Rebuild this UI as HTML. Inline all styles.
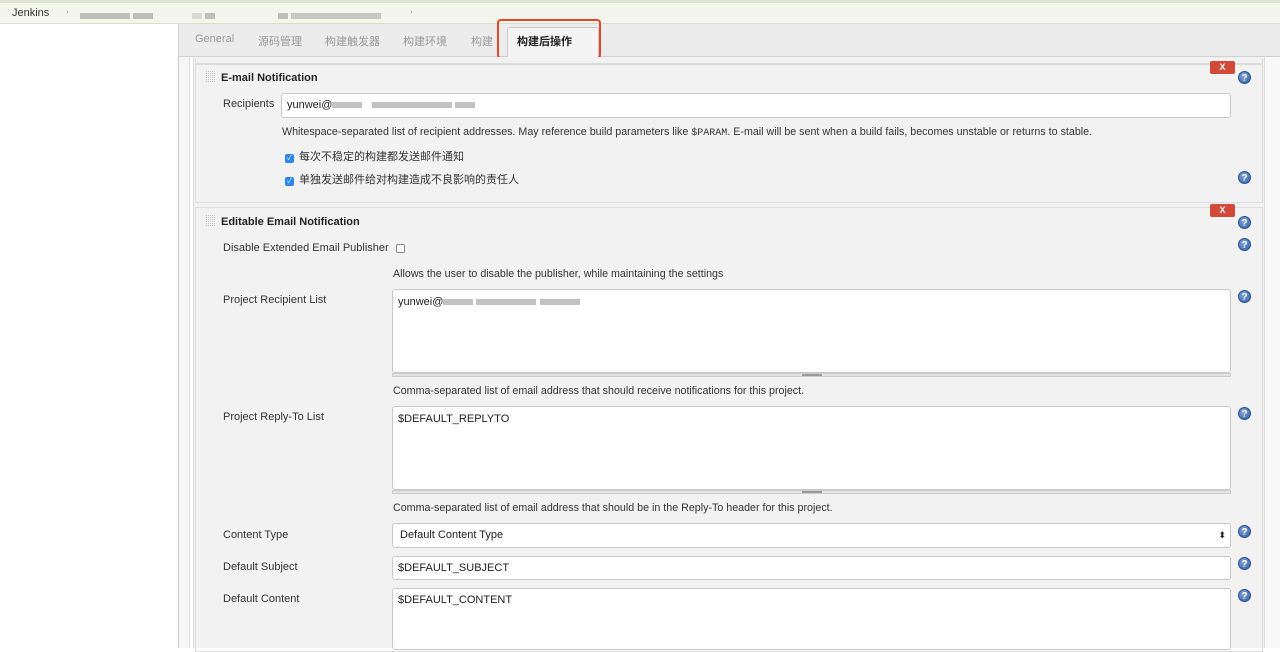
<!DOCTYPE html>
<html><head><meta charset="utf-8"><style>
*{margin:0;padding:0;box-sizing:border-box}
body{width:1280px;height:648px;overflow:hidden;background:#fff;font-family:"Liberation Sans","Noto Sans CJK SC",sans-serif;font-size:11px;color:#333;position:relative}
.a{position:absolute}
.top{left:0;top:0;width:1280px;height:24px;background:#f4f6ec;border-top:3px solid #dfe3d2;border-bottom:1px solid #d8dccb}
.tabs{left:178px;top:24px;width:1102px;height:33px;background:#ececec;border-left:1px solid #ccc;border-bottom:1px solid #d0d0d0}
.tab{top:33px;font-size:11px;color:#999}
.strip{left:178px;top:57px;width:12px;height:591px;background:#f6f6f6;border-left:1px solid #ccc;border-right:1px solid #ddd}
.panel{left:193px;top:57px;width:1072px;height:591px;background:#f2f2f2;border-left:1px solid #ddd;border-right:1px solid #ddd}
.rs{left:1265px;top:57px;width:15px;height:591px;background:#f8f8f8}
.sec{left:195px;border:1px solid #dcdcdc;width:1068px}
.h{font-weight:bold;font-size:11px;color:#222}
.grip{width:9px;height:12px;background-image:linear-gradient(90deg,transparent 50%,#f2f2f2 50%),linear-gradient(transparent 50%,#f2f2f2 50%);background-color:#c4c4c4;background-size:2px 2px}
.x{width:25px;height:13px;background:#d24939;color:#fff;font-size:9px;text-align:center;line-height:13px;border-radius:2px;font-weight:bold}
.q{width:13px;height:13px;border-radius:50%;background:radial-gradient(circle at 40% 35%,#7fa4d8,#2d5ea8);color:#fff;font-size:10px;font-weight:bold;text-align:center;line-height:13px;border:1px solid #294f8f}
.in{background:#fff;border:1px solid #c9c9c9;border-radius:3px;font-size:11px;color:#222;padding-left:5px}
.cb{width:9px;height:9px;border-radius:2px;background:#2d86f0;color:#fff;font-size:7px;line-height:9px;text-align:center}
.lbl{font-size:11px;color:#333}
.d{font-size:10.7px;color:#333}
.blur{display:inline-block;height:6px;background:#999;vertical-align:middle;opacity:.6}
</style></head><body>
<div class="a top"></div>
<div class="a" style="left:12px;top:7px;font-size:11px;color:#333">Jenkins</div>
<div class="a" style="left:66px;top:7px;color:#999;font-size:8px">›</div>
<div class="a" style="left:80px;top:10px"><span class="blur" style="width:50px"></span> <span class="blur" style="width:20px"></span></div>
<div class="a" style="left:192px;top:10px"><span class="blur" style="width:10px;opacity:.3"></span> <span class="blur" style="width:10px"></span></div>
<div class="a" style="left:278px;top:10px"><span class="blur" style="width:10px"></span> <span class="blur" style="width:90px;opacity:.5"></span></div>
<div class="a" style="left:410px;top:7px;color:#999;font-size:8px">›</div>

<div class="a tabs"></div>
<div class="a tab" style="left:195px">General</div>
<div class="a tab" style="left:258px">源码管理</div>
<div class="a tab" style="left:325px">构建触发器</div>
<div class="a tab" style="left:403px">构建环境</div>
<div class="a tab" style="left:471px">构建</div>
<div class="a" style="left:507px;top:27px;width:92px;height:31px;background:#f4f4f4;border:1px solid #ccc;border-bottom:none;border-radius:3px 3px 0 0"></div>
<div class="a" style="left:517px;top:33px;font-weight:bold;color:#222">构建后操作</div>
<div class="a" style="left:497px;top:19px;width:104px;height:40px;border:2px solid #e9452a;border-radius:4px"></div>

<div class="a strip"></div>
<div class="a panel"></div>
<div class="a rs"></div>

<div class="a sec" style="top:59px;height:5px;border-top:none"></div>
<div class="a sec" style="top:64px;height:139px"></div>
<div class="a grip" style="left:206px;top:71px"></div>
<div class="a h" style="left:221px;top:72px">E-mail Notification</div>
<div class="a x" style="left:1210px;top:61px">X</div>
<div class="a q" style="left:1238px;top:71px">?</div>
<div class="a lbl" style="left:223px;top:98px">Recipients</div>
<div class="a in" style="left:281px;top:93px;width:950px;height:25px;line-height:23px">yunwei@<span class="blur" style="width:30px"></span> &nbsp; <span class="blur" style="width:80px"></span> <span class="blur" style="width:20px"></span></div>
<div class="a d" style="left:282px;top:126px">Whitespace-separated list of recipient addresses. May reference build parameters like <span style="font-family:'Liberation Mono',monospace;font-size:10px">$PARAM</span>. E-mail will be sent when a build fails, becomes unstable or returns to stable.</div>
<div class="a cb" style="left:285px;top:154px">✓</div>
<div class="a lbl" style="left:299px;top:148px">每次不稳定的构建都发送邮件通知</div>
<div class="a cb" style="left:285px;top:177px">✓</div>
<div class="a lbl" style="left:299px;top:171px">单独发送邮件给对构建造成不良影响的责任人</div>
<div class="a q" style="left:1238px;top:171px">?</div>

<div class="a sec" style="top:207px;height:445px"></div>
<div class="a grip" style="left:206px;top:215px"></div>
<div class="a h" style="left:221px;top:216px">Editable Email Notification</div>
<div class="a x" style="left:1210px;top:204px">X</div>
<div class="a q" style="left:1238px;top:216px">?</div>
<div class="a lbl" style="left:223px;top:242px">Disable Extended Email Publisher</div>
<div class="a" style="left:396px;top:244px;width:9px;height:9px;border:1px solid #888;border-radius:2px;background:#fff"></div>
<div class="a q" style="left:1238px;top:238px">?</div>
<div class="a d" style="left:393px;top:268px">Allows the user to disable the publisher, while maintaining the settings</div>

<div class="a lbl" style="left:223px;top:294px">Project Recipient List</div>
<div class="a in" style="left:392px;top:289px;width:839px;height:84px;padding-top:6px">yunwei@<span class="blur" style="width:30px"></span> <span class="blur" style="width:60px"></span> <span class="blur" style="width:40px"></span></div>
<div class="a" style="left:392px;top:373px;width:839px;height:4px;background:#e4e4e4;border:1px solid #ccc"></div>
<div class="a" style="left:802px;top:374px;width:20px;height:2px;background:#999"></div>
<div class="a q" style="left:1238px;top:290px">?</div>
<div class="a d" style="left:393px;top:385px">Comma-separated list of email address that should receive notifications for this project.</div>

<div class="a lbl" style="left:223px;top:411px">Project Reply-To List</div>
<div class="a in" style="left:392px;top:406px;width:839px;height:84px;padding-top:6px">$DEFAULT_REPLYTO</div>
<div class="a" style="left:392px;top:490px;width:839px;height:4px;background:#e4e4e4;border:1px solid #ccc"></div>
<div class="a" style="left:802px;top:491px;width:20px;height:2px;background:#999"></div>
<div class="a q" style="left:1238px;top:407px">?</div>
<div class="a d" style="left:393px;top:502px">Comma-separated list of email address that should be in the Reply-To header for this project.</div>

<div class="a lbl" style="left:223px;top:529px">Content Type</div>
<div class="a in" style="left:392px;top:523px;width:839px;height:25px;line-height:23px;padding-left:7px">Default Content Type<span style="position:absolute;right:4px;top:0;font-size:9px">⬍</span></div>
<div class="a q" style="left:1238px;top:525px">?</div>
<div class="a lbl" style="left:223px;top:561px">Default Subject</div>
<div class="a in" style="left:392px;top:556px;width:839px;height:24px;line-height:22px">$DEFAULT_SUBJECT</div>
<div class="a q" style="left:1238px;top:557px">?</div>
<div class="a lbl" style="left:223px;top:593px">Default Content</div>
<div class="a in" style="left:392px;top:588px;width:839px;height:62px;padding-top:5px">$DEFAULT_CONTENT</div>
<div class="a q" style="left:1238px;top:589px">?</div>
</body></html>
